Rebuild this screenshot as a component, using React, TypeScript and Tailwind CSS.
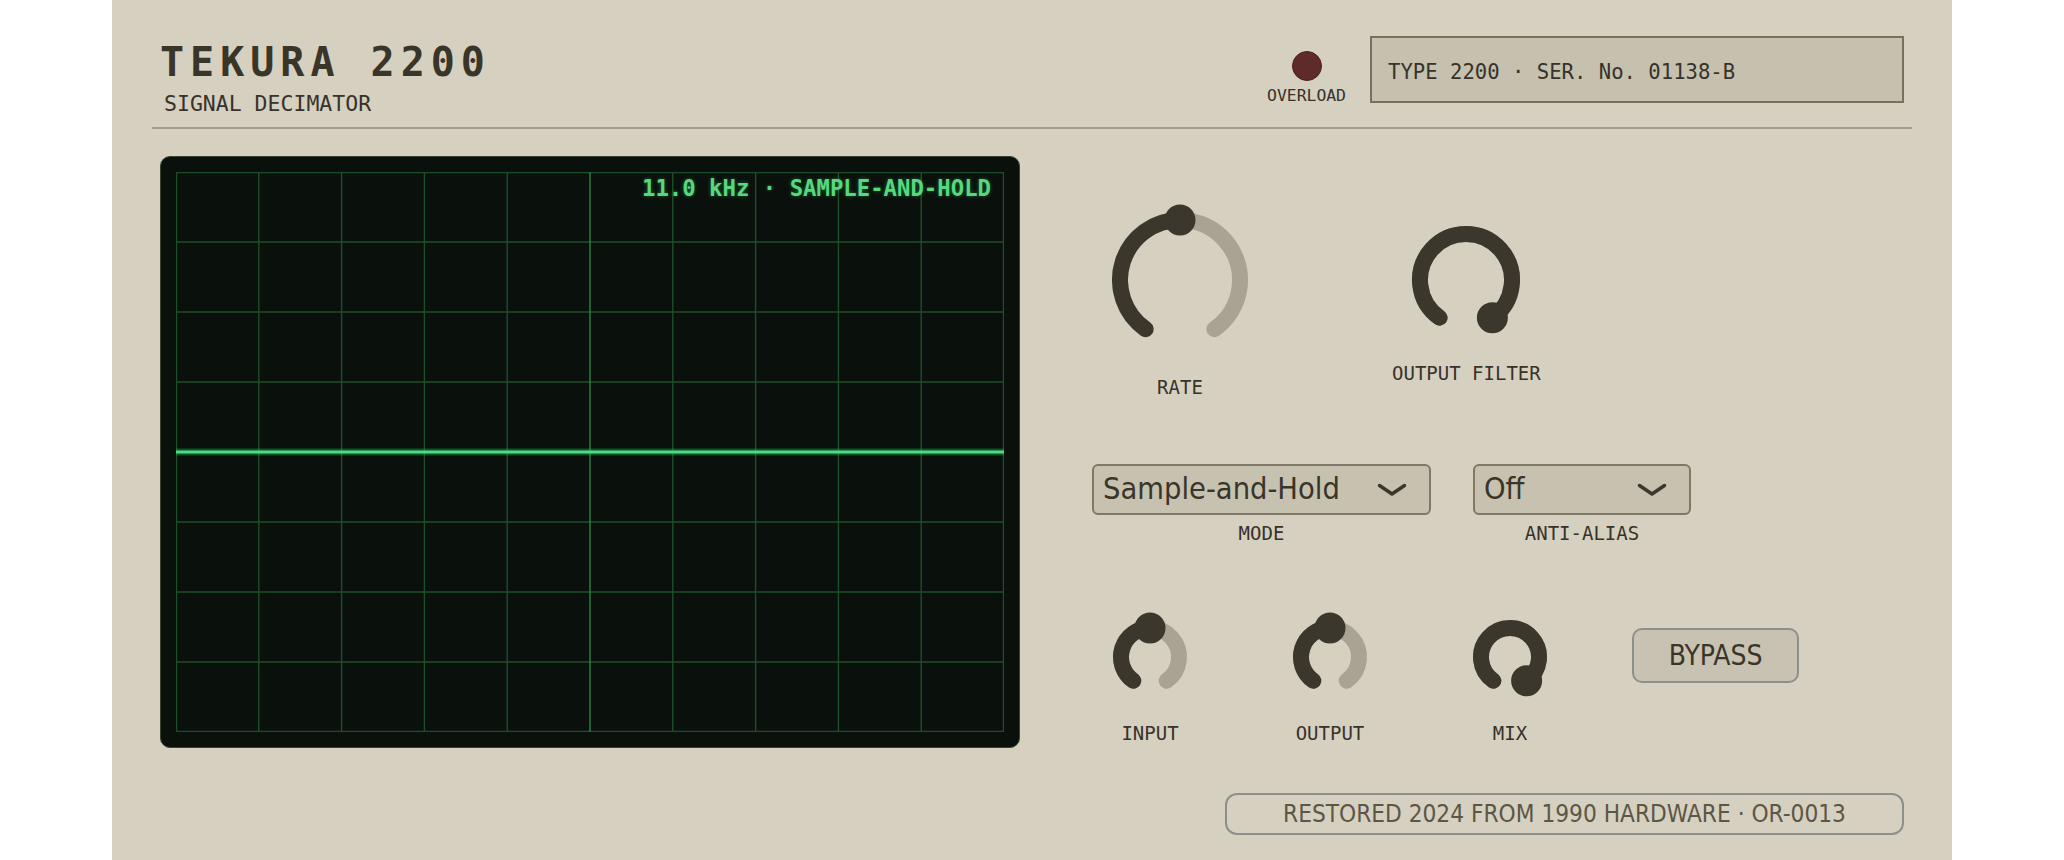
import React from "react";

const MONO = "font-['DejaVu_Sans_Mono',monospace]";
const SANS = "font-['DejaVu_Sans_Condensed','DejaVu_Sans',sans-serif] font-stretch-condensed";

function Knob({ r, value, label }: { r: number; value: number; label: string }) {
  const pad = 22;
  const S = 2 * (r + pad);
  const c = S / 2;
  const a0 = -145;
  const a1 = 145;
  const av = a0 + (a1 - a0) * value;
  const pt = (a: number) => {
    const rad = (a * Math.PI) / 180;
    return [c + r * Math.sin(rad), c - r * Math.cos(rad)];
  };
  const arc = (from: number, to: number) => {
    const [x0, y0] = pt(from);
    const [x1, y1] = pt(to);
    const large = to - from > 180 ? 1 : 0;
    return `M ${x0} ${y0} A ${r} ${r} 0 ${large} 1 ${x1} ${y1}`;
  };
  const [dx, dy] = pt(av);
  return (
    <div className="flex flex-col items-center">
      <svg width={S} height={S} viewBox={`0 0 ${S} ${S}`}>
        <path d={arc(a0, a1)} fill="none" stroke="#a8a393" strokeWidth={16} strokeLinecap="round" />
        {value > 0 && (
          <path d={arc(a0, av)} fill="none" stroke="#3b372d" strokeWidth={16} strokeLinecap="round" />
        )}
        <circle cx={dx} cy={dy} r={15.5} fill="#3b372d" />
      </svg>
      <div className={`${MONO} mt-3 text-[19px] leading-[27px] text-[#37322a]`}>{label}</div>
    </div>
  );
}

function Chevron() {
  return (
    <svg width="30" height="14" viewBox="0 0 30 14">
      <path d="M2.5 2.5 L15 11 L27.5 2.5" fill="none" stroke="#3b372d" strokeWidth="3.5" strokeLinecap="round" strokeLinejoin="round" />
    </svg>
  );
}

function Select({ value, label, width }: { value: string; label: string; width: string }) {
  return (
    <div className="flex flex-col items-center">
      <div
        className={`${width} h-[51px] rounded-[6px] border-2 border-[#7f7866] bg-[#c7c1b0] flex items-center justify-between pl-[9px] pr-[22px]`}
      >
        <span className={`${SANS} text-[30.5px] leading-none text-[#3a3529]`}>{value}</span>
        <Chevron />
      </div>
      <div className={`${MONO} mt-[5px] text-[19px] leading-[27px] text-[#37322a]`}>{label}</div>
    </div>
  );
}

function Scope() {
  const W = 828;
  const H = 560;
  const cols = Array.from({ length: 11 }, (_, i) => i);
  const rows = Array.from({ length: 9 }, (_, i) => i);
  return (
    <div className="relative w-[860px] h-[592px] rounded-[10px] border border-[#3a4433] bg-[#0a100b] p-[15px]">
      <svg width={W} height={H} viewBox={`0 0 ${W} ${H}`} className="block">
        {rows.map((j) => {
          const y = j === 0 ? 0.5 : j === 8 ? H - 0.5 : j * 70;
          return <line key={`h${j}`} x1={0} x2={W} y1={y} y2={y} stroke="#1d4f29" strokeWidth={1.4} />;
        })}
        {cols.map((i) => {
          const x = i === 0 ? 0.5 : i === 10 ? W - 0.5 : i * 82.8;
          return (
            <line
              key={`v${i}`}
              x1={x}
              x2={x}
              y1={0}
              y2={H}
              stroke={i === 5 ? "#2e8444" : "#1d4f29"}
              strokeWidth={1.4}
            />
          );
        })}
        <line x1={0} x2={W} y1={280} y2={280} stroke="#22c55e" strokeOpacity={0.35} strokeWidth={7} />
        <line x1={0} x2={W} y1={280} y2={280} stroke="#4ade80" strokeWidth={3.2} />
      </svg>
      <div
        className={`${MONO} absolute top-[17px] right-[28px] text-[22.3px] font-bold leading-[29px] text-[#55d87e] [text-shadow:0_0_4px_rgba(74,222,128,0.4)]`}
      >
        11.0 kHz · SAMPLE-AND-HOLD
      </div>
    </div>
  );
}

export default function App() {
  return (
    <div className="w-full min-h-[860px] bg-white flex justify-center">
      <div className="w-[1840px] min-h-[860px] bg-[#d6d0c0] px-10 pt-9 pb-10">
        {/* Header */}
        <div className="flex items-start justify-between px-2 pb-[9px]">
          <div className="flex flex-col">
            <div className={`${MONO} mt-[2px] text-[40px] font-bold leading-[48px] tracking-[0.15em] text-[#3a3529]`}>
              TEKURA 2200
            </div>
            <div className={`${MONO} mt-1 pl-1 text-[21.5px] leading-[28px] text-[#37322a]`}>
              SIGNAL DECIMATOR
            </div>
          </div>
          <div className="flex items-start gap-6">
            <div className="mt-[15px] flex flex-col items-center">
              <div className="w-[30px] h-[30px] rounded-full bg-[#5e2a2a] border border-[#4a2121]" />
              <div className={`${MONO} mt-[5px] text-[16.4px] leading-[20px] text-[#37322a]`}>OVERLOAD</div>
            </div>
            <div className="w-[534px] h-[67px] border-2 border-[#77705d] bg-[#c6c0ae] flex items-center pl-[16px] pt-[5px]">
              <span className={`${MONO} text-[20.6px] text-[#37322a]`}>TYPE 2200 · SER. No. 01138-B</span>
            </div>
          </div>
        </div>
        <div className="h-[2px] bg-[#a39d8d]" />

        {/* Body */}
        <div className="flex items-start px-2 pt-[27px]">
          <Scope />
          <div className="ml-[72px] w-[812px] flex flex-col pt-[42px]">
            <div className="flex items-center pl-[6px]">
              <Knob r={60} value={0.5} label="RATE" />
              <div className="ml-[130px]">
                <Knob r={46} value={1} label="OUTPUT FILTER" />
              </div>
            </div>
            <div className="mt-[63px] flex items-start gap-[42px]">
              <Select value="Sample-and-Hold" label="MODE" width="w-[339px]" />
              <Select value="Off" label="ANTI-ALIAS" width="w-[218px]" />
            </div>
            <div className="mt-[59px] flex items-start pl-[7px]">
              <Knob r={29} value={0.5} label="INPUT" />
              <div className="ml-[78px]">
                <Knob r={29} value={0.5} label="OUTPUT" />
              </div>
              <div className="ml-[78px]">
                <Knob r={29} value={1} label="MIX" />
              </div>
              <div className="ml-[71px] h-[99px] flex items-center">
                <div className="w-[167px] h-[55px] rounded-[10px] border-2 border-[#8b908d] bg-[#c8c2b2] flex items-center justify-center">
                  <span className={`${SANS} text-[28px] leading-none text-[#3a3529]`}>BYPASS</span>
                </div>
              </div>
            </div>
          </div>
        </div>

        {/* Footer */}
        <div className="mt-[45px] flex justify-end px-2">
          <div className="w-[679px] h-[42px] rounded-[12px] border-2 border-[#8c8f8c] flex items-center justify-center">
            <span className={`${SANS} text-[24.2px] leading-none text-[#5c5646]`}>
              RESTORED 2024 FROM 1990 HARDWARE · OR-0013
            </span>
          </div>
        </div>
      </div>
    </div>
  );
}
